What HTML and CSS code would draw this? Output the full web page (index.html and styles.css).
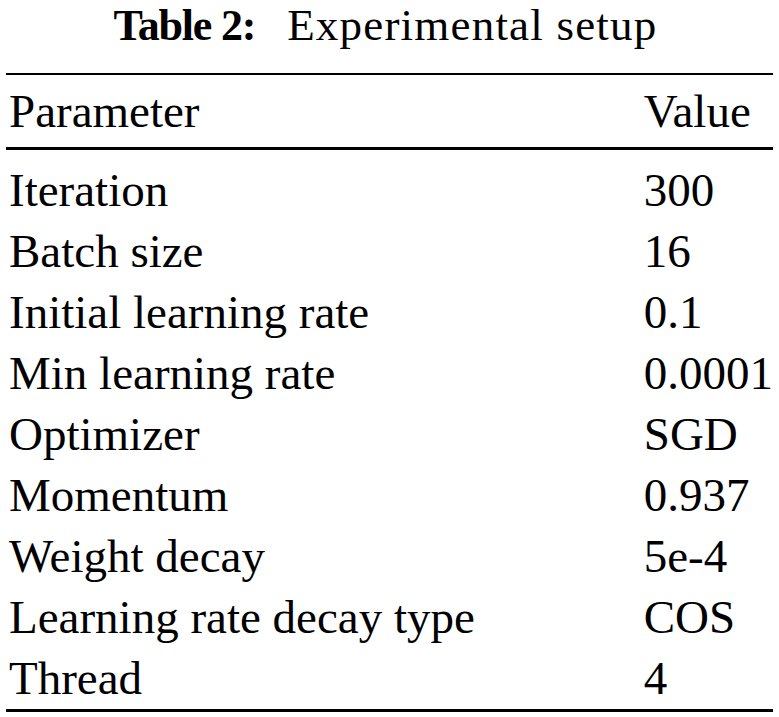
FILE: index.html
```html
<!DOCTYPE html>
<html>
<head>
<meta charset="utf-8">
<link rel="stylesheet" href="styles.css">
</head>
<body>
<div class="page">
  <div class="caption"><span class="label">Table 2:</span><span class="title">Experimental setup</span></div>
  <table class="setup">
    <thead>
      <tr><th class="param">Parameter</th><th class="value">Value</th></tr>
    </thead>
    <tbody>
      <tr><td class="param">Iteration</td><td class="value">300</td></tr>
      <tr><td class="param">Batch size</td><td class="value">16</td></tr>
      <tr><td class="param">Initial learning rate</td><td class="value">0.1</td></tr>
      <tr><td class="param">Min learning rate</td><td class="value">0.0001</td></tr>
      <tr><td class="param">Optimizer</td><td class="value">SGD</td></tr>
      <tr><td class="param">Momentum</td><td class="value">0.937</td></tr>
      <tr><td class="param">Weight decay</td><td class="value">5e-4</td></tr>
      <tr><td class="param">Learning rate decay type</td><td class="value">COS</td></tr>
      <tr><td class="param">Thread</td><td class="value">4</td></tr>
    </tbody>
  </table>
</div>
</body>
</html>
```

FILE: styles.css
```css
html, body {
  margin: 0;
  padding: 0;
  background: #ffffff;
}

.page {
  width: 779px;
  font-family: "Liberation Serif", "Times New Roman", serif;
  color: #000000;
}

.caption {
  display: flex;
  justify-content: center;
  align-items: baseline;
  gap: 32px;
  height: 50px;
  line-height: 50px;
  margin: 0 0 23px 0;
  padding-right: 8px;
}

.caption .label {
  font-weight: bold;
  font-size: 44px;
  letter-spacing: -1.2px;
}

.caption .title {
  font-size: 45px;
  letter-spacing: 1.2px;
}

.setup {
  margin-left: 6px;
  width: 767px;
  border-collapse: collapse;
  font-size: 47px;
  line-height: 61px;
  border-top: 2px solid #000;
  border-bottom: 3px solid #000;
}

.setup th {
  font-weight: normal;
  text-align: left;
}

.setup th,
.setup td {
  padding: 0;
  white-space: nowrap;
}

.setup thead th {
  padding-top: 6px;
  padding-bottom: 5px;
  border-bottom: 3px solid #000;
}

.setup .param {
  padding-left: 3px;
}

.setup .value {
  width: 122px;
}

.setup tbody tr:first-child td {
  padding-top: 10px;
}

.setup tbody tr:last-child td {
  padding-bottom: 0;
}
```
